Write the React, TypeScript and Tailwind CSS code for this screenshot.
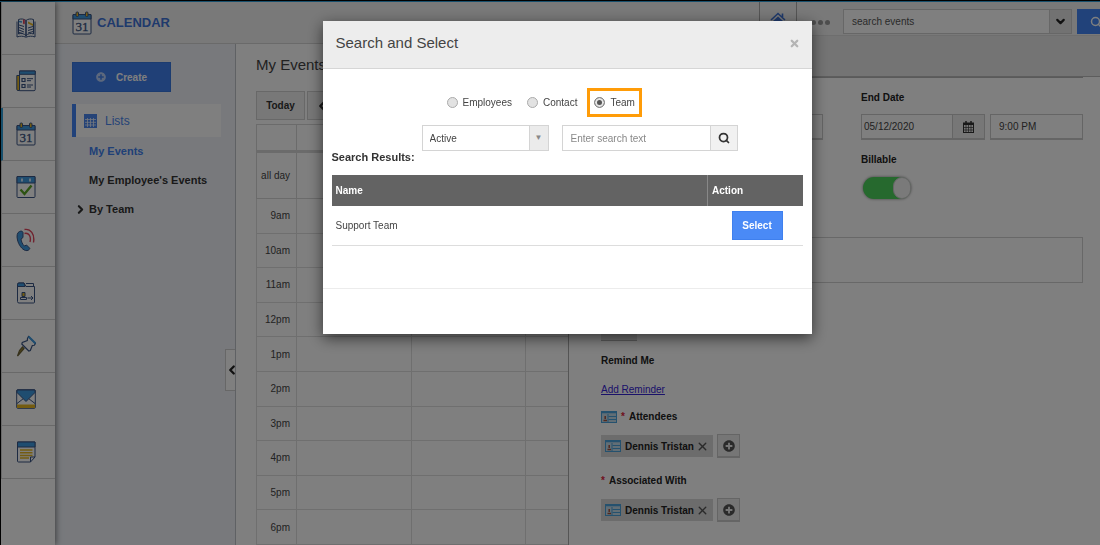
import React from "react";
import { ChevronDown, ChevronLeft, ChevronRight, Search, X } from "lucide-react";
import { FaPlusCircle } from "react-icons/fa";

const NAVY = "#3a5584";
const SKY = "#3f9be0";
const GOLD = "#e8b923";

function BookIcon() {
  return (
    <svg width="20" height="20" viewBox="0 0 20 20" fill="none" stroke={NAVY} strokeWidth="1">
      <path d="M10 2.500C8 .8 5 .6 2.500 1.500V16C5 15 8 15.500 10 17.500 12 15.500 15 15 17.500 16V1.500C15 .6 12 .8 10 2.500Z" fill="#fff" />
      <path d="M1 3.500V19c3-1.200 6-1 9 .2 3-1.200 6-1.400 9-.2V3.500" />
      <path d="M10 2.500v16" strokeWidth="1.600" />
      <path d="M3 7l5 1.500M3 9.500l5 2M3 12l5 2M3 14.500l4 1M12 10l5-1.500M12 12.500l5-1.500M12 15l5-1.500" />
      <path d="M7 1.500h1.800v5L7.900 5.600 7 6.500Z" fill="#e0455c" stroke="none" />
      <path d="M3 3.500l3 .5" stroke={SKY} strokeWidth="1.500" />
      <path d="M12 3.500l5 2.500v2l-5-2.500Z" fill={GOLD} stroke="none" />
    </svg>
  );
}

function NewsIcon() {
  return (
    <svg width="20" height="22" viewBox="0 0 20 22" fill="none" stroke={NAVY} strokeWidth="1">
      <path d="M.8 5.500h3v15H2a1.200 1.200 0 0 1-1.200-1.200Z" fill={GOLD} />
      <path d="M3.500 1h15.700v18.500a1.200 1.200 0 0 1-1.200 1.200H3.500Z" fill="#fff" />
      <path d="M3.500 1h15.700v3.300H3.500Z" fill={SKY} />
      <path d="M6 8.500h3v3H6ZM6 14.500h3v3H6Z" strokeWidth="1.200" />
      <path d="M11 8.700h6M11 10.700h4M11 15h6M11 17h4" />
    </svg>
  );
}

function Calendar31Icon() {
  return (
    <svg width="20" height="24" viewBox="0 0 20 24" fill="none" stroke={NAVY} strokeWidth="1">
      <rect x="1" y="3.500" width="18" height="19.500" rx="1" fill="#fff" />
      <path d="M1 3.500h18v4.500H1Z" fill={SKY} />
      <rect x="4" y="1" width="2.500" height="4.500" rx="1" fill={GOLD} />
      <rect x="13.500" y="1" width="2.500" height="4.500" rx="1" fill={GOLD} />
      <text x="10" y="20" textAnchor="middle" fontSize="13" fontFamily="Liberation Serif" fill={NAVY} stroke={NAVY} strokeWidth=".3">31</text>
    </svg>
  );
}

function TaskIcon() {
  return (
    <svg width="20" height="24" viewBox="0 0 20 24" fill="none" stroke={NAVY} strokeWidth="1">
      <rect x="1" y="1.500" width="18" height="21" rx="1" fill="#fff" />
      <path d="M1 1.500h18V8H1Z" fill={SKY} />
      <path d="M6 3.500v3M14 3.500v3" stroke="#dff0ff" strokeWidth="1.800" />
      <path d="M4.500 14.500l4 4.500L15.500 10.500" stroke="#5aa626" strokeWidth="2.400" />
    </svg>
  );
}

function CallIcon() {
  return (
    <svg width="20" height="24" viewBox="0 0 20 24" fill="none" stroke={NAVY} strokeWidth="1">
      <path d="M3.500 3.500C1 4.500.500 8 1.500 12c1.200 5 4.500 9.500 8 10.500 2 .5 4-.5 4.300-2.200L10.500 17 8.500 18C6.500 16.500 5.300 13.500 5 11L7 9.500V4.500C6.500 3 5 2.800 3.500 3.500Z" fill={SKY} />
      <path d="M8.500 1.500C14.500.5 19 6 17.500 14.500M8.500 5.500C12.500 4.500 15.500 8 14 14" stroke="#e0455c" strokeWidth="1.400" />
    </svg>
  );
}

function FolderIcon() {
  return (
    <svg width="20" height="22" viewBox="0 0 20 22" fill="none" stroke={NAVY} strokeWidth="1">
      <path d="M1.500 2.500a1.500 1.500 0 0 1 1.500-1.500h5l2 3.500h8.500V20a1 1 0 0 1-1 1H3a1.500 1.500 0 0 1-1.500-1.500Z" fill="#fff" />
      <path d="M1.500 4.500V2.500a1.500 1.500 0 0 1 1.500-1.500h5l1 3.500Z" fill={SKY} />
      <path d="M10 1.500h7.500v3" />
      <path d="M6 10.500h3v4H6Z" fill={GOLD} />
      <path d="M4.500 17.500v-2h6v2ZM11.500 16h5.500M15 14l2 2-2 2" />
    </svg>
  );
}

function PinIcon() {
  return (
    <svg width="20" height="22" viewBox="0 0 20 22" fill="none" stroke={NAVY} strokeWidth="1.200">
      <path d="M8 13.500L1.500 21l2-5.500 3-3.500Z" fill="#a48a2c" stroke="#6d6338" />
      <path d="M12.500 1.500l7 7-1.200 1.800-2 .2-2 5-1.500.5-7-7 .5-1.500 5-2 .2-2Z" fill="#fff" />
      <path d="M12.500 1.500l7 7" stroke={SKY} strokeWidth="2" />
    </svg>
  );
}

function MailIcon() {
  return (
    <svg width="20" height="20" viewBox="0 0 20 20" fill="none" stroke={NAVY} strokeWidth="1">
      <rect x=".7" y=".7" width="18.600" height="18.600" rx="1" fill="#fff" />
      <path d="M1 15.500h18v3.500H1Z" fill={GOLD} stroke="none" />
      <path d="M1 14.500l6.500-5M19 14.500l-6.500-5" />
      <path d="M1 1h18v2.500l-9 9-9-9Z" fill={SKY} />
    </svg>
  );
}

function NoteIcon() {
  return (
    <svg width="20" height="22" viewBox="0 0 20 22" fill="none" stroke={NAVY} strokeWidth="1">
      <path d="M1.500 1h17.500v15l-4.500 5h-12a1 1 0 0 1-1-1Z" fill="#fff" />
      <path d="M1.500 1h17.500v5H1.500Z" fill={SKY} />
      <path d="M4 9h12.500M4 11.700h12.500M4 14.400h12.500M4 17h9" stroke={GOLD} strokeWidth="1.500" />
      <path d="M19 16h-4.500v5" />
    </svg>
  );
}

function HomeIcon() {
  return (
    <svg width="16" height="16" viewBox="0 0 16 16" fill="none" stroke="#3f74d8" strokeWidth="1.600">
      <path d="M1 8l7-6.500L15 8M12.500 5V1.500" />
      <path d="M3 9l5-4.500L13 9v6H3Z" fill="#3f74d8" stroke="none" />
    </svg>
  );
}

function CardIcon() {
  return (
    <svg width="16" height="12" viewBox="0 0 16 12" fill="none" stroke="#4ba3dc" strokeWidth="1" className="shrink-0">
      <rect x=".5" y=".5" width="15" height="11" fill="#c4dcea" />
      <path d="M.5 1.500h15" strokeWidth="1.500" />
      <path d="M7.500 5.500H15M7.500 8.500H15M7 3v8" />
      <path d="M2.500 9.500h3.500M4.200 5v3" stroke="#a5523c" strokeWidth="1.500" />
    </svg>
  );
}

function ListIcon() {
  return (
    <svg width="13" height="14" viewBox="0 0 13 14" fill="none">
      <path d="M0 0h13v14H0Z" fill="#4a86ee" />
      <path d="M1 5.500h11M1 8.300h11M1 11h11M3.500 4v9M6.500 4v9M9.500 4v9" stroke="#eaf1fd" strokeWidth=".8" />
    </svg>
  );
}

function DatePickerIcon() {
  return (
    <svg width="11" height="12" viewBox="0 0 11 12" fill="none" stroke="currentColor">
      <rect x=".5" y="2" width="10" height="9.500" />
      <path d="M.5 3h10" strokeWidth="2" />
      <path d="M3 0v2.500M8 0v2.500" strokeWidth="1.500" />
      <path d="M.5 6.500h10M.5 9h10M3 4v7.500M5.500 4v7.500M8 4v7.500" strokeWidth=".7" />
    </svg>
  );
}

const railItems = [
  { label: "Directory", icon: <BookIcon /> },
  { label: "News", icon: <NewsIcon /> },
  { label: "Calendar", icon: <Calendar31Icon />, active: true },
  { label: "Tasks", icon: <TaskIcon /> },
  { label: "Calls", icon: <CallIcon /> },
  { label: "Contacts", icon: <FolderIcon /> },
  { label: "Pinned", icon: <PinIcon /> },
  { label: "Mail", icon: <MailIcon /> },
  { label: "Notes", icon: <NoteIcon /> },
];

const hours = ["9am", "10am", "11am", "12pm", "1pm", "2pm", "3pm", "4pm", "5pm", "6pm"];

function Rail() {
  return (
    <nav className="z-10 w-[55px] shrink-0 border-l border-black bg-white shadow-[1px_0_6px_rgba(0,0,0,0.5)]">
      {railItems.map((item) => (
        <a
          key={item.label}
          href="#"
          aria-label={item.label}
          className={
            item.active
              ? "flex h-[53px] items-center justify-center border-b border-l-2 border-b-[#d2d2d2] border-l-[#2e9fd8] pr-[6px]"
              : "flex h-[53px] items-center justify-center border-b border-l border-[#d2d2d2] pr-[5px]"
          }
        >
          {item.icon}
        </a>
      ))}
    </nav>
  );
}

function TopBar() {
  return (
    <header className="flex h-[42px] shrink-0 items-start border-b border-[#d4d4d4] bg-[#f3f3f3] pl-[17px]">
      <div className="flex h-full flex-1 items-center gap-[5px]">
        <Calendar31Icon />
        <h1 className="text-[13px] font-bold text-[#3f74d8]">CALENDAR</h1>
      </div>
      <a href="#" aria-label="Home" className="flex h-full w-[38px] items-start justify-center border-x border-[#aaa] pt-[10px]">
        <HomeIcon />
      </a>
      <button aria-label="More" className="flex h-10 w-[46px] items-center justify-center gap-[2px]">
        {[0, 1, 2].map((d) => (
          <span key={d} className="size-[5px] rounded-full bg-[#9a9a9a]" />
        ))}
      </button>
      <form className="mt-[7px] flex h-[25px]">
        <input
          aria-label="search events"
          placeholder="search events"
          className="w-[207px] border border-[#cfcfcf] bg-white px-2 text-[10px] placeholder:text-[#555]"
        />
        <button type="button" aria-label="Search options" className="flex w-[22px] items-center justify-center border border-l-0 border-[#cfcfcf] bg-[#e4e4e4] text-[#222]">
          <ChevronDown size={13} strokeWidth={4} />
        </button>
        <button type="button" aria-label="Search" className="ml-[5px] flex w-[23px] items-center overflow-hidden bg-[#4285f4] pl-[13px] text-white">
          <Search size={12} strokeWidth={3} className="shrink-0" />
        </button>
      </form>
    </header>
  );
}

function SideMenu() {
  return (
    <aside className="relative w-[181px] shrink-0 border-r border-[#bfc2c8] bg-[#f0f3f9] pr-[14px] pl-[17px] pt-[18px]">
      <button className="flex h-[30px] w-[99px] items-center justify-center gap-[10px] border border-[#3878e0] bg-[#4080ee] text-[10px] font-bold text-white">
        <FaPlusCircle size={10} className="text-[#b8d0fb]" />
        Create
      </button>
      <a href="#" className="mt-3 flex h-[33px] items-center gap-2 border-l-4 border-[#4285f4] bg-white pl-2 text-xs text-[#4a86ee]">
        <ListIcon />
        Lists
      </a>
      <ul className="text-[11px] leading-[29px] font-bold text-[#333]">
        <li className="pl-[17px]">
          <a href="#" className="text-[#4080ee]">My Events</a>
        </li>
        <li className="pl-[17px] whitespace-nowrap">
          <a href="#">My Employee's Events</a>
        </li>
        <li>
          <a href="#" className="flex items-center gap-[2px] pl-[2px]">
            <ChevronRight size={13} strokeWidth={4} />
            By Team
          </a>
        </li>
      </ul>
      <button aria-label="Collapse menu" className="absolute top-[305px] right-0 flex h-[42px] w-[10px] items-center justify-center border border-r-0 border-[#cfcfcf] bg-white pl-[2px] text-[#222]">
        <ChevronLeft size={14} strokeWidth={4} className="shrink-0" />
      </button>
    </aside>
  );
}

function DayGrid() {
  return (
    <section className="flex min-w-0 flex-1 flex-col overflow-hidden pt-2 pl-5">
      <h2 className="h-[39px] text-[15px] leading-[26px] text-[#444]">My Events</h2>
      <div className="flex shrink-0 gap-[2px] text-[10px] font-bold text-[#333]">
        <button className="h-[29px] w-[49px] border border-[#d0d0d0] bg-[#f1f1f1]">Today</button>
        <button aria-label="Previous" className="flex h-[29px] w-[30px] items-center justify-center border border-[#d0d0d0] bg-[#f1f1f1]">
          <ChevronLeft size={14} strokeWidth={4} />
        </button>
      </div>
      <div className="mt-1 min-h-0 flex-1">
        <table className="h-full w-[385px] table-fixed border-collapse text-[10px] text-[#444]">
          <colgroup>
            <col className="w-10" />
            <col />
            <col />
            <col />
          </colgroup>
          <thead>
            <tr className="h-[27px]">
              <th className="border border-b-[3px] border-[#d6d6d6]" />
              <th className="border border-b-[3px] border-[#d6d6d6]" />
              <th className="border border-b-[3px] border-[#d6d6d6]" />
              <th className="border border-b-[3px] border-[#d6d6d6]" />
            </tr>
          </thead>
          <tbody>
            <tr className="h-[47px]">
              <th className="border border-[#d6d6d6] pr-[6px] text-right font-normal whitespace-nowrap">all day</th>
              <td className="border border-[#d6d6d6]" />
              <td className="border border-[#d6d6d6]" />
              <td className="border border-[#d6d6d6]" />
            </tr>
            {hours.map((h) => (
              <tr key={h}>
                <th className="border border-[#dedede] pr-[6px] text-right font-normal">{h}</th>
                <td className="border border-[#dedede]" />
                <td className="border border-[#dedede]" />
                <td className="border border-[#dedede]" />
              </tr>
            ))}
          </tbody>
        </table>
      </div>
    </section>
  );
}

const field = "h-[26px] min-w-0 border border-b-2 border-[#cbcbcb] bg-white text-[10px] text-[#444]";
const fieldLabel = "block h-4 text-[10px] leading-4 font-bold text-[#222]";

function DateField({ id, label, date, time }: { id: string; label?: string; date?: string; time?: string }) {
  return (
    <div>
      <label htmlFor={id} className={fieldLabel}>{label}</label>
      <div className="mt-2 flex">
        <input id={id} defaultValue={date} className={field + " flex-1 pl-[2px]"} />
        <button aria-label="Pick date" className="flex h-[26px] w-8 items-center justify-center border border-b-2 border-l-0 border-[#cbcbcb] bg-[#efefef] text-[#333]">
          <DatePickerIcon />
        </button>
        <input aria-label="Time" defaultValue={time} className={field + " ml-[5px] w-[93px] pl-2"} />
      </div>
    </div>
  );
}

function PersonRow() {
  return (
    <div className="flex items-center gap-1">
      <span className="flex h-[22px] w-28 items-center bg-[#d8d8d8] pl-1 text-[10px] text-[#222]">
        <CardIcon />
        <span className="flex-1 pl-1 font-bold whitespace-nowrap">Dennis Tristan</span>
        <button aria-label="Remove Dennis Tristan" className="pr-1 text-[#555]">
          <X size={13} strokeWidth={2.500} />
        </button>
      </span>
      <button aria-label="Add person" className="flex h-6 w-[23px] items-center justify-center border border-b-2 border-[#cbcbcb] bg-[#ededed] text-[#555]">
        <FaPlusCircle size={12} />
      </button>
    </div>
  );
}

function EventPanel() {
  return (
    <section className="z-10 -mt-[9px] w-[532px] shrink-0 border-l border-[#aaa] bg-white">
      <div className="h-[42px] border-t border-b border-t-[#dcdcdc] border-b-[#bbb] bg-[#e9e9e9]" />
      <div className="mr-[17px] ml-8 border-t border-[#b4b4b4] pt-3">
        <div className="grid grid-cols-2 gap-x-[38px]">
          <DateField id="start" />
          <DateField id="end" label="End Date" date="05/12/2020" time="9:00 PM" />
          <div className="col-start-2 pt-3">
            <label htmlFor="billable" className={fieldLabel}>Billable</label>
            <input
              id="billable"
              type="checkbox"
              role="switch"
              defaultChecked
              className="mt-[9px] ml-[2px] block h-[22px] w-12 appearance-none rounded-full bg-[#ccc] shadow-[0_0_3px_rgba(0,0,0,0.5)] before:ml-auto before:block before:h-[22px] before:w-[18px] before:rounded-full before:border before:border-[#ccc] before:bg-[#f4f4f4] checked:bg-[#4cd25c]"
            />
          </div>
        </div>
        <textarea aria-label="Notes" className="mt-[38px] block h-[46px] w-full resize-none border border-[#d0d0d0]" />
        <div className="mt-[32px] h-[26px] w-9 border-b border-[#b4b4b4] bg-[#e0e0e0]" />
        <h3 className="mt-3 text-[10px] leading-4 font-bold text-[#222]">Remind Me</h3>
        <a href="#" className="mt-[13px] block text-[10px] leading-4 text-[#3524d4] underline">Add Reminder</a>
        <h3 className="mt-[11px] flex h-4 items-center gap-1 text-[10px] leading-4 font-bold text-[#222]">
          <CardIcon />
          <span className="text-[#e0243c]">*</span>
          Attendees
        </h3>
        <div className="mt-[9px]"><PersonRow /></div>
        <h3 className="mt-[15px] flex gap-1 text-[10px] leading-4 font-bold text-[#222]">
          <span className="text-[#e0243c]">*</span>
          Associated With
        </h3>
        <div className="mt-[9px]"><PersonRow /></div>
      </div>
    </section>
  );
}

const radio =
  "size-[11px] appearance-none rounded-full border border-[#aaa] bg-[#e2e2e2] checked:border-[#888] checked:bg-[#555] checked:shadow-[inset_0_0_0_2px_#e6e6e6]";

function SelectDialog() {
  return (
    <div className="fixed inset-0 z-20 flex items-start justify-center bg-black/50 pt-[21px] pl-[34px]">
      <div role="dialog" aria-labelledby="dialog-title" className="w-[489px] bg-white shadow-[0_4px_14px_rgba(0,0,0,0.6)]">
        <header className="flex h-12 items-center justify-between border-b border-[#d6d6d6] bg-[#ededed] pr-3 pb-[2px] pl-[13px]">
          <h2 id="dialog-title" className="text-[15px] text-[#444]">Search and Select</h2>
          <button aria-label="Close" className="text-[#b4b4b4]">
            <X size={11} strokeWidth={5} />
          </button>
        </header>
        <div className="px-[9px] pt-[19px]">
          <div className="flex h-[29px] items-center pl-[115px] text-[10px] text-[#444]">
            <label className="flex items-center gap-[5px]">
              <input type="radio" name="kind" className={radio} />
              Employees
            </label>
            <label className="ml-[15px] flex items-center gap-[5px]">
              <input type="radio" name="kind" className={radio} />
              Contact
            </label>
            <label className="ml-[10px] flex h-[29px] items-center gap-[5px] border-[3px] border-[#ff9c08] px-1">
              <input type="radio" name="kind" defaultChecked className={radio} />
              Team
            </label>
          </div>
          <div className="mt-2 flex h-[26px] pl-[90px] text-[10px]">
            <div className="relative w-[127px]">
              <select aria-label="Status" className="h-full w-full appearance-none border border-[#d4d4d4] bg-white pl-[7px] text-[#444]">
                <option>Active</option>
              </select>
              <span className="pointer-events-none absolute inset-y-0 right-0 flex w-5 items-center justify-center border border-[#d4d4d4] bg-[#ebebeb] text-[8px] text-[#888]">▼</span>
            </div>
            <input
              aria-label="Enter search text"
              placeholder="Enter search text"
              className="ml-[13px] w-[149px] border border-[#d4d4d4] pl-2 placeholder:text-[#888]"
            />
            <button aria-label="Search" className="flex w-[27px] items-center justify-center border border-l-0 border-[#d4d4d4] bg-[#f1f1f1] text-[#333]">
              <Search size={12} strokeWidth={3.500} />
            </button>
          </div>
          <h3 className="h-6 text-[11px] leading-3 font-bold text-[#333]">Search Results:</h3>
          <table className="w-full table-fixed border-collapse text-[10px]">
            <thead>
              <tr className="h-[31px] bg-[#636363] text-left text-white">
                <th className="pl-1">Name</th>
                <th className="w-[95px] border-l border-[#888] pl-1">Action</th>
              </tr>
            </thead>
            <tbody>
              <tr className="h-[39px] border-b border-[#ddd] text-[#444]">
                <td className="pl-1">Support Team</td>
                <td className="pl-6">
                  <button className="block h-[29px] w-[51px] border border-[#3f80ee] bg-[#4a8af6] font-bold text-white">Select</button>
                </td>
              </tr>
            </tbody>
          </table>
        </div>
        <footer className="mt-[42px] h-[46px] border-t border-[#ececec]" />
      </div>
    </div>
  );
}

export default function App() {
  return (
    <div className="flex h-screen flex-col overflow-hidden border-t border-black bg-white font-['Liberation_Sans',Arial,sans-serif]">
      <div className="h-px shrink-0 bg-[#2e9fd8]" />
      <div className="flex min-h-0 flex-1">
        <Rail />
        <div className="flex min-w-0 flex-1 flex-col">
          <TopBar />
          <div className="flex min-h-0 flex-1">
            <SideMenu />
            <DayGrid />
            <EventPanel />
          </div>
        </div>
      </div>
      <SelectDialog />
    </div>
  );
}
